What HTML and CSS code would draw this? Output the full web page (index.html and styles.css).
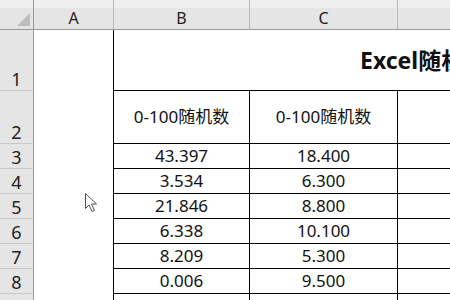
FILE: index.html
```html
<!DOCTYPE html>
<html lang="zh">
<head>
<meta charset="utf-8">
<link rel="stylesheet" href="styles.css">
</head>
<body>
<div class="sheet">
  <div class="colhead corner"><span class="tri"></span></div>
  <div class="colhead">A</div>
  <div class="colhead">B</div>
  <div class="colhead">C</div>
  <div class="colhead last"></div>

  <div class="rowhead r1">1</div>
  <div class="cell a r1"></div>
  <div class="cell title">Excel随机数生成</div>

  <div class="rowhead r2">2</div>
  <div class="cell a r2"></div>
  <div class="cell r2">0-100随机数</div>
  <div class="cell r2">0-100随机数</div>
  <div class="cell r2 d"></div>

  <div class="rowhead">3</div><div class="cell a"></div><div class="cell">43.397</div><div class="cell">18.400</div><div class="cell d"></div>
  <div class="rowhead">4</div><div class="cell a"></div><div class="cell">3.534</div><div class="cell">6.300</div><div class="cell d"></div>
  <div class="rowhead">5</div><div class="cell a"></div><div class="cell">21.846</div><div class="cell">8.800</div><div class="cell d"></div>
  <div class="rowhead">6</div><div class="cell a"></div><div class="cell">6.338</div><div class="cell">10.100</div><div class="cell d"></div>
  <div class="rowhead">7</div><div class="cell a"></div><div class="cell">8.209</div><div class="cell">5.300</div><div class="cell d"></div>
  <div class="rowhead">8</div><div class="cell a"></div><div class="cell">0.006</div><div class="cell">9.500</div><div class="cell d"></div>
  <div class="rowhead">9</div><div class="cell a"></div><div class="cell">2.754</div><div class="cell">15.600</div><div class="cell d"></div>
</div>
<svg class="cursor" width="14" height="22" viewBox="0 0 14 22">
  <path d="M1.5 1.5 L1.5 16.5 L5 13 L8 19.5 L10.5 18.5 L7.5 12 L12.5 12 Z" fill="#fff" stroke="#555" stroke-width="1" stroke-linejoin="miter"/>
</svg>
</body>
</html>
```

FILE: styles.css
```css
html, body {
  margin: 0;
  padding: 0;
  width: 450px;
  height: 300px;
  overflow: hidden;
  background: #fff;
  font-family: "Noto Sans", "Noto Sans CJK SC", sans-serif;
  color: #111;
}

.sheet {
  display: grid;
  grid-template-columns: 34px 80px 136px 148px 52px;
  grid-template-rows: 30px 61px 53px repeat(7, 25px);
  width: 450px;
}

.colhead {
  box-sizing: border-box;
  background: linear-gradient(#f0eff0 0, #f0eff0 8px, #e6e5e6 8px);
  border-bottom: 1px solid #9a9a9a;
  border-right: 1px solid #b8b8b8;
  font-size: 16px;
  color: #222;
  display: flex;
  align-items: flex-end;
  justify-content: center;
  padding-bottom: 2px;
  line-height: 18px;
  position: relative;
}

.colhead.corner {
  border-right: 1px solid #9a9a9a;
}

.colhead.last {
  border-right: none;
}

.tri {
  position: absolute;
  right: 3px;
  bottom: 3px;
  width: 0;
  height: 0;
  border-left: 13px solid transparent;
  border-bottom: 13px solid #bdbdbd;
}

.rowhead {
  box-sizing: border-box;
  background: #e6e5e6;
  border-right: 1px solid #9a9a9a;
  border-bottom: 1px solid #c9c9c9;
  font-size: 18px;
  color: #222;
  display: flex;
  align-items: flex-end;
  justify-content: center;
  line-height: 22px;
}

.cell {
  box-sizing: border-box;
  border-right: 1px solid #000;
  border-bottom: 1px solid #000;
  font-size: 17px;
  display: flex;
  align-items: center;
  justify-content: center;
  white-space: nowrap;
  line-height: 20px;
}

.cell.a {
  border-bottom: none;
}

.cell.d {
  border-right: none;
}

.cell.title {
  grid-column: 3 / 6;
  justify-content: flex-start;
  padding-left: 246px;
  font-size: 23px;
  font-weight: 700;
  border-right: none;
  overflow: hidden;
}

.cursor {
  position: absolute;
  left: 84px;
  top: 192px;
}
```
